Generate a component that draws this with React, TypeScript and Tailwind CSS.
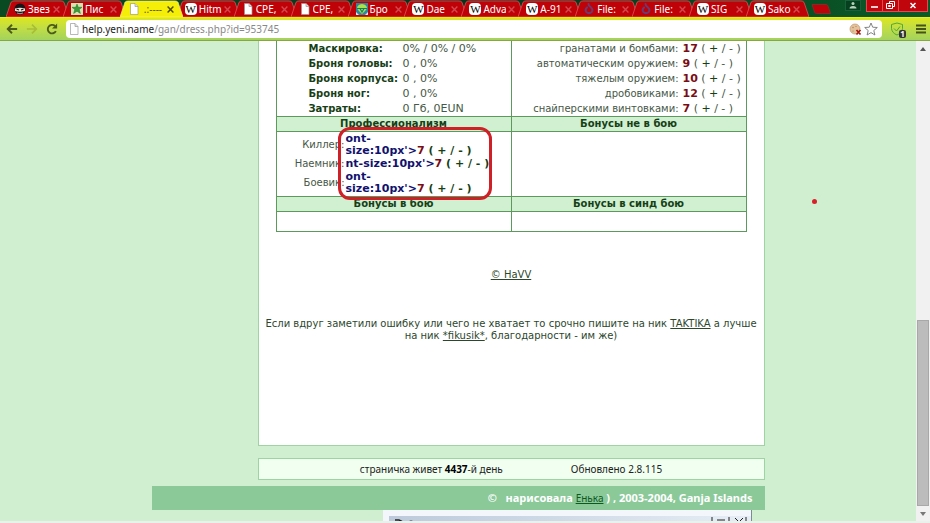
import type { ReactNode } from "react";

type IconName = "ninja" | "star" | "page" | "wiki" | "armor" | "flame";

const TABS: { title: string; icon: IconName; active?: boolean }[] = [
  { title: "Звез", icon: "ninja" },
  { title: "Пис", icon: "star" },
  { title: ".:----", icon: "page", active: true },
  { title: "Hitm", icon: "wiki" },
  { title: "СРЕ,", icon: "page" },
  { title: "СРЕ,", icon: "page" },
  { title: "Бро", icon: "armor" },
  { title: "Dae", icon: "wiki" },
  { title: "Adva", icon: "wiki" },
  { title: "A-91", icon: "wiki" },
  { title: "File:", icon: "flame" },
  { title: "File:", icon: "flame" },
  { title: "SIG", icon: "wiki" },
  { title: "Sako", icon: "wiki" },
];

const STATS = [
  { label: "Маскировка:", value: "0% / 0% / 0%" },
  { label: "Броня головы:", value: "0 , 0%" },
  { label: "Броня корпуса:", value: "0 , 0%" },
  { label: "Броня ног:", value: "0 , 0%" },
  { label: "Затраты:", value: "0 Гб, 0EUN" },
];

const SKILLS = [
  { label: "гранатами и бомбами:", value: 17 },
  { label: "автоматическим оружием:", value: 9 },
  { label: "тяжелым оружием:", value: 10 },
  { label: "дробовиками:", value: 12 },
  { label: "снайперскими винтовками:", value: 7 },
];

const PROFESSIONS = [
  { label: "Киллер:", junk: "ont-size:10px'>", value: 7 },
  { label: "Наемник:", junk: "nt-size:10px'>", value: 7 },
  { label: "Боевик:", junk: "ont-size:10px'>", value: 7 },
];

function PageIcon({ className }: { className: string }) {
  return (
    <svg viewBox="0 0 12 12" className={className}>
      <path d="M2.500 .5h4.500l3 3v8h-7.500z" fill="#fff" stroke="#999" strokeWidth=".7" />
      <path d="M7 .5v3h3" fill="#ddd" stroke="#999" strokeWidth=".7" />
    </svg>
  );
}

function Favicon({ name }: { name: IconName }) {
  if (name === "page") return <PageIcon className="size-3 shrink-0" />;
  if (name === "wiki") {
    return (
      <span className="size-3 shrink-0 rounded-sm bg-white text-center font-['Liberation_Serif',serif] text-[11px] leading-3 text-black">
        W
      </span>
    );
  }
  return (
    <svg viewBox="0 0 12 12" className="size-3 shrink-0">
      {name === "ninja" && (
        <>
          <circle cx="6" cy="6" r="5.500" fill="#15151a" />
          <path d="M1 5.500q5-1.500 10 0v2.500q-5 1.500-10 0z" fill="#f4e4dc" />
          <path d="M2.500 6l2.500 1M9.500 6L7 7" stroke="#111" strokeWidth="1.200" />
          <path d="M3 10q3 1.500 6 0" stroke="#ccc" strokeWidth=".8" fill="none" />
        </>
      )}
      {name === "star" && (
        <>
          <path d="M0 0h12v12H0z" fill="#d8e4b0" />
          <path
            d="M6 1l1.300 3.300h3.700L8.200 6.500l1.200 4L6 8.200l-3.400 2.300 1.200-4L1 4.300h3.700z"
            fill="#3f9a3a"
            stroke="#257325"
            strokeWidth=".5"
          />
        </>
      )}
      {name === "armor" && (
        <>
          <path d="M0 0h12v12H0z" fill="#2f86a0" />
          <path d="M1 5.500q0-4 5-4.500 5 .5 5 4.500L9 8 6 11 3 8z" fill="#a9e04c" />
          <path d="M1 5.500h10M4 5.500L6 9l2-3.500" stroke="#15805f" strokeWidth="1.200" fill="none" />
          <path d="M0 9l3 3H0zM12 9l-3 3h3z" fill="#dce9fa" />
        </>
      )}
      {name === "flame" && (
        <path
          d="M5.500 1q0 2 2.200 3.200 2.800 2.300 1 4.800-2.700 2.300-5.400 0-1.600-2.500.7-4.500"
          fill="none"
          stroke="#6a3a72"
          strokeWidth="2"
          strokeLinecap="round"
        />
      )}
    </svg>
  );
}

function Tab({ title, icon, active }: { title: string; icon: IconName; active?: boolean }) {
  return (
    <div className={active ? "relative z-10 min-w-0 flex-1" : "relative min-w-0 flex-1"}>
      <svg
        viewBox="0 0 63 18"
        preserveAspectRatio="none"
        className="absolute inset-y-0 left-0 h-full w-[63px]"
      >
        <path
          d="M0 18L5 2.500Q6 1 8 1h47q2 0 3 1.500L63 18z"
          fill={active ? "#f4ee09" : "#bf0208"}
          stroke={active ? "#f7f28a" : "#e8636a"}
          strokeWidth=".7"
        />
      </svg>
      <div className="relative flex h-full items-center gap-0.5 pt-px pl-2">
        <Favicon name={icon} />
        <span
          className={
            active
              ? "w-[23px] overflow-hidden pl-0.5 text-[10px] leading-4 whitespace-nowrap text-[#5b5510]"
              : "w-[23px] overflow-hidden text-[10px] leading-4 whitespace-nowrap text-white"
          }
        >
          {title}
        </span>
        <button type="button" aria-label="Закрыть вкладку">
          <svg viewBox="0 0 6 6" className={active ? "size-[7px] text-[#4d490c]" : "size-[7px] text-[#d4474d]"}>
            <path d="M.5 .5l5 5M5.500 .5l-5 5" stroke="currentColor" strokeWidth="1.200" />
          </svg>
        </button>
      </div>
    </div>
  );
}

function WindowControls() {
  return (
    <div className="flex items-start">
      <button type="button" aria-label="Профиль" className="h-[11px] w-4 border border-[#18603a] bg-[#06401f]">
        <svg viewBox="0 0 14 9" className="h-full w-full fill-[#b5d3bc]">
          <circle cx="7" cy="2.500" r="1.500" />
          <path d="M3.500 7.500q0-2.500 3.500-2.500t3.500 2.500z" />
        </svg>
      </button>
      <div className="ml-[5px] flex h-3 gap-px border border-t-0 border-[#e04a50] bg-[#e04a50]">
        <button type="button" aria-label="Свернуть" className="w-[15px] bg-[#c0060c]">
          <svg viewBox="0 0 15 11" className="h-full w-full">
            <path d="M4 7h7" stroke="#fff" strokeWidth="1.600" />
          </svg>
        </button>
        <button type="button" aria-label="Развернуть" className="w-[15px] bg-[#c0060c]">
          <svg viewBox="0 0 15 11" className="h-full w-full" fill="none" stroke="#fff">
            <path d="M6.500 3.500v-2h5v5h-2M3.500 3.500h6v5h-6zM5.500 5.500h2v1h-2z" />
          </svg>
        </button>
        <button type="button" aria-label="Закрыть" className="w-7 bg-[#c0060c]">
          <svg viewBox="0 0 28 11" className="h-full w-full">
            <path d="M11.500 3l5 5M16.500 3l-5 5" stroke="#fff" strokeWidth="1.500" />
          </svg>
        </button>
      </div>
    </div>
  );
}

function Toolbar() {
  return (
    <div className="flex h-6 items-center gap-2 border-t border-b border-t-[#f0ee12] border-b-[#86a743] bg-linear-to-b from-[#dbe61c] to-[#a2d35c] px-1">
      <button type="button" aria-label="Назад" className="ml-0.5">
        <svg viewBox="0 0 14 14" className="size-3" fill="none" stroke="#4c5a1b" strokeWidth="2.200">
          <path d="M13 7H2M7 2L2 7l5 5" />
        </svg>
      </button>
      <button type="button" aria-label="Вперед">
        <svg viewBox="0 0 14 14" className="size-3" fill="none" stroke="#a9bd35" strokeWidth="2">
          <path d="M1 7h11M7 2l5 5-5 5" />
        </svg>
      </button>
      <button type="button" aria-label="Обновить">
        <svg viewBox="0 0 14 14" className="size-3" fill="none" stroke="#4c5a1b" strokeWidth="2.200">
          <path d="M11.500 9.500A5 5 0 1 1 10.500 3.500" />
          <path d="M13 .5v6H7z" fill="#4c5a1b" stroke="none" />
        </svg>
      </button>
      <div className="flex h-[18px] flex-1 items-center rounded-sm bg-white pr-1 pl-0.5">
        <PageIcon className="size-3" />
        <div className="relative ml-0.5 flex-1 text-[10px] leading-4 text-[#888]">
          {/* the host part is darker than the path, so the field's own text is transparent */}
          <span aria-hidden="true" className="pointer-events-none absolute inset-0">
            <span className="text-[#222]">help.yeni.name</span>/gan/dress.php?id=953745
          </span>
          <input
            type="text"
            aria-label="Адрес"
            defaultValue="help.yeni.name/gan/dress.php?id=953745"
            className="block w-full bg-transparent text-transparent outline-none"
          />
        </div>
        <button type="button" aria-label="Файлы cookie" className="ml-1">
          <svg viewBox="0 0 13 13" className="size-[13px]">
            <circle cx="6" cy="6" r="5" fill="#e3c39c" stroke="#c09a70" strokeWidth=".7" />
            <circle cx="4" cy="4.500" r=".7" fill="#a87a50" />
            <circle cx="7" cy="3.500" r=".6" fill="#a87a50" />
            <circle cx="4" cy="8" r=".6" fill="#a87a50" />
            <path d="M7.500 7l4 4.500M11.500 7l-4 4.500" stroke="#a5180f" strokeWidth="1.700" />
          </svg>
        </button>
        <button type="button" aria-label="В закладки" className="ml-0.5">
          <svg viewBox="0 0 14 14" className="size-[14px]" fill="#fff" stroke="#777" strokeWidth=".9">
            <path d="M7 1l1.700 4.200 4.600.3-3.500 3 1.100 4.500L7 10.600 3.100 13l1.100-4.500-3.500-3 4.600-.3z" />
          </svg>
        </button>
      </div>
      <button type="button" aria-label="Защита" className="relative">
        <svg viewBox="0 0 14 14" className="size-[14px]" fill="none" stroke="#4fa83a">
          <path d="M7 1l5.500 1.500v4Q12 11 7 13 2 11 1.500 6.500v-4z" />
          <path d="M4 6.500L6.500 9 10 4.500" />
        </svg>
        <span className="absolute -right-0.5 -bottom-0.5 h-2 w-[7px] rounded-xs bg-[#333] text-center text-[8px] leading-2 font-bold text-white">
          1
        </span>
      </button>
      <button type="button" aria-label="Меню" className="ml-1">
        <svg viewBox="0 0 10 10" className="size-[10px]" stroke="#46521c" strokeWidth="1.800">
          <path d="M0 1.500h10M0 5h10M0 8.500h10" />
        </svg>
      </button>
    </div>
  );
}

function Heading({ children }: { children: ReactNode }) {
  return (
    <th className="h-[15px] w-1/2 border border-[#5b9a5b] bg-[#d0f0d1] p-0 text-[10px] leading-[14px] font-bold text-[#173f17]">
      {children}
    </th>
  );
}

function CharacterTable() {
  return (
    <table className="w-full table-fixed border-collapse text-[10px] text-[#465846]">
      <tbody>
        <tr>
          <td className="border border-t-0 border-[#5b9a5b] p-0 align-bottom">
            <table className="ml-8 leading-[15px]">
              <tbody>
                {STATS.map((s) => (
                  <tr key={s.label}>
                    <th className="w-[94px] p-0 text-left font-bold whitespace-nowrap text-[#173f17]">{s.label}</th>
                    <td className="p-0 text-[11px]">{s.value}</td>
                  </tr>
                ))}
              </tbody>
            </table>
          </td>
          <td className="border border-t-0 border-[#5b9a5b] p-0 align-bottom">
            <table className="w-full leading-[15px]">
              <tbody>
                {SKILLS.map((s) => (
                  <tr key={s.label}>
                    <td className="p-0 text-right">{s.label}</td>
                    <td className="w-[67px] p-0 pl-1 text-[11px] whitespace-nowrap">
                      <b className="text-[#7a0c14]">{s.value}</b> ( <span className="text-[#173f17]">+</span> / - )
                    </td>
                  </tr>
                ))}
              </tbody>
            </table>
          </td>
        </tr>
        <tr>
          <Heading>Профессионализм</Heading>
          <Heading>Бонусы не в бою</Heading>
        </tr>
        <tr>
          <td className="h-[65px] border border-[#5b9a5b] p-0">
            <div className="relative">
              <table className="w-full leading-3">
                <tbody>
                  {PROFESSIONS.map((p) => (
                    <tr key={p.label}>
                      <td className="w-[68px] p-0 text-right">{p.label}</td>
                      <td className="p-0 pb-px pl-px text-[11px] font-bold text-[#173f17]">
                        <div className="w-[148px]">
                          <span className="text-[#12126e]">{p.junk}</span>
                          <span className="whitespace-nowrap">
                            <span className="text-[#7a0c14]">{p.value}</span> ( + / - )
                          </span>
                        </div>
                      </td>
                    </tr>
                  ))}
                </tbody>
              </table>
              <div className="pointer-events-none absolute -top-1.5 -bottom-1 left-[61px] w-[154px] rounded-xl border-[3px] border-[#cf2027]" />
            </div>
          </td>
          <td className="border border-[#5b9a5b] p-0" />
        </tr>
        <tr>
          <Heading>Бонусы в бою</Heading>
          <Heading>Бонусы в синд бою</Heading>
        </tr>
        <tr>
          <td className="h-5 border border-[#5b9a5b] p-0" />
          <td className="border border-[#5b9a5b] p-0" />
        </tr>
      </tbody>
    </table>
  );
}

function Scrollbar() {
  return (
    <div className="flex w-[14px] shrink-0 flex-col bg-[#f1f1f1] px-px">
      <div className="flex h-[15px] items-center justify-center">
        <svg viewBox="0 0 6 4" className="h-1 w-1.5">
          <path d="M0 4h6L3 0z" fill="#555" />
        </svg>
      </div>
      <div className="flex-[266]" />
      <div className="flex-[186] border border-[#a8a8a8] bg-[#bcbcbc]" />
      <div className="flex h-[15px] items-center justify-center">
        <svg viewBox="0 0 6 4" className="h-1 w-1.5">
          <path d="M0 0h6L3 4z" fill="#777" />
        </svg>
      </div>
    </div>
  );
}

export default function App() {
  return (
    <div className="flex h-screen flex-col overflow-hidden bg-[#d0efd1] font-['Noto_Sans',sans-serif]">
      <header className="shrink-0">
        <div className="flex h-[17px] bg-linear-to-r from-[#0a4a23] via-[#06351c] to-[#0b5a28] pr-0.5 pl-1.5">
          <div className="flex min-w-0 flex-1">
            {TABS.map((tab, i) => (
              <Tab key={i} {...tab} />
            ))}
          </div>
          <button type="button" aria-label="Новая вкладка" className="mt-1 mr-[14px] ml-2 h-[10px] w-5">
            <svg viewBox="0 0 20 10" className="h-full w-full">
              <path d="M1 .5h14q1.500 0 2 1.500l2.500 7.500H5.500Q4 9.500 3.500 8z" fill="#bf0208" stroke="#8d3434" strokeWidth=".6" />
            </svg>
          </button>
          <WindowControls />
        </div>
        <Toolbar />
      </header>

      <div className="flex min-h-0 flex-1 border-b-2 border-[#eaf0ea] font-['DejaVu_Sans',Verdana,sans-serif]">
        <main className="relative min-w-0 flex-1 overflow-hidden">
          <div className="mx-auto max-w-[613px]">
            <div className="ml-[106px]">
              <section className="h-[405px] border border-t-0 border-[#9fd3a4] bg-white px-[17px]">
                <CharacterTable />
                <div className="-mx-3 text-center text-[10px] leading-3 text-[#2c482c]">
                  <p className="mt-[37px]">
                    <a href="#havv" className="underline">
                      © HaVV
                    </a>
                  </p>
                  <p className="mt-[37px]">
                    Если вдруг заметили ошибку или чего не хватает то срочно пишите на ник{" "}
                    <a href="#taktika" className="underline">
                      TAKTIKA
                    </a>{" "}
                    а лучше на ник{" "}
                    <a href="#fikusik" className="underline">
                      *fikusik*
                    </a>
                    , благодарности - им же)
                  </p>
                </div>
              </section>
              <section className="mt-3 flex h-[22px] items-center justify-center gap-[68px] border border-[#9fd3a4] bg-[#f0fff0] font-['Noto_Sans',sans-serif] text-[10px] text-[#222]">
                <span>
                  страничка живет <b className="text-black">4437</b>-й день
                </span>
                <span>Обновлено 2.8.115</span>
              </section>
            </div>
            <footer className="mt-[6px] flex h-6 items-center justify-end bg-[#8bc999] pr-3 font-['Noto_Sans',sans-serif] text-[11px] font-bold whitespace-pre text-white">
              ©   нарисовала{" "}
              <a href="#enka" className="text-[10px] font-normal text-[#0d5a1e] underline">
                Енька
              </a>
              {" ) , 2003-2004, Ganja Islands"}
            </footer>
          </div>
          {/* top edge of a window lying behind the browser */}
          <div className="absolute bottom-0 left-[383px] h-[11px] w-[369px] border-r border-[#7b8a93] bg-[#f3f7fb] pt-1.5 pl-1.5">
            <div className="flex h-full items-start justify-between bg-linear-to-r from-[#bccadb] to-[#e6edf5] pr-1">
              <svg viewBox="0 0 22 5" className="ml-1.5 h-[5px] w-[22px]">
                <path d="M0 4h4l3 1.500" stroke="#222" strokeWidth="1.500" fill="none" />
                <path d="M14 5.500q2-1.500 4 0" stroke="#556" fill="none" />
              </svg>
              <svg viewBox="0 0 36 5" className="h-[5px] w-9" stroke="#222">
                <path d="M1 1v4M6 4h8M18 1v4M24 2l3 3M32 2l-3 3M35 1v4" />
              </svg>
            </div>
          </div>
          <div className="absolute top-[158px] left-[812px] size-[5px] rounded-full bg-[#d8202a]" />
        </main>
        <Scrollbar />
      </div>
    </div>
  );
}
